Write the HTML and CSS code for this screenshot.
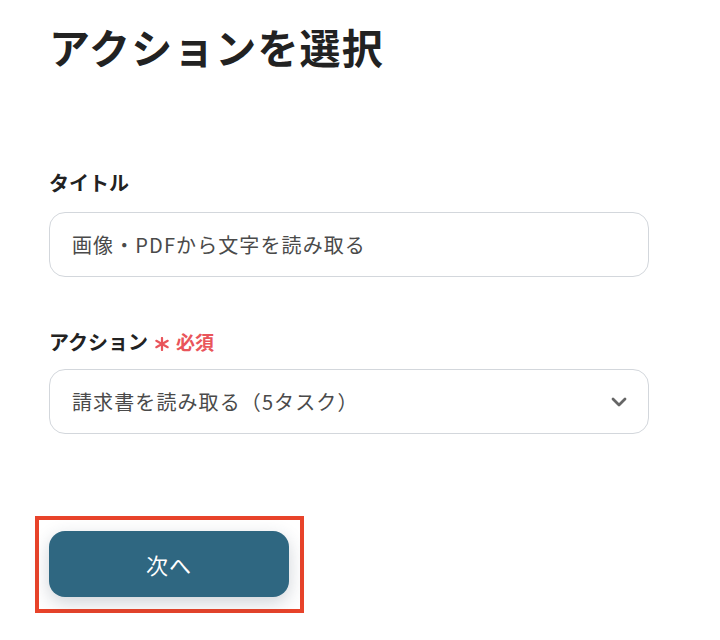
FILE: index.html
```html
<!DOCTYPE html>
<html lang="ja">
<head>
<meta charset="utf-8">
<title>アクションを選択</title>
<link rel="stylesheet" href="styles.css">
</head>
<body>
<main class="page">
  <h1 class="title">アクションを選択</h1>

  <div class="field field-title">
    <label class="label">タイトル</label>
    <div class="box">画像・PDFから文字を読み取る</div>
  </div>

  <div class="field field-action">
    <label class="label">アクション<span class="req"><svg class="star" width="16" height="14" viewBox="0 0 16 14" aria-hidden="true"><g stroke="#e9555b" stroke-width="2.2" stroke-linecap="round"><path d="M8 1 L8 13"/><path d="M2.3 3.8 L13.7 10.2"/><path d="M2.3 10.2 L13.7 3.8"/></g></svg>必須</span></label>
    <div class="box select">
      <span>請求書を読み取る（5タスク）</span>
      <svg class="chev" width="16" height="10" viewBox="0 0 16 10" aria-hidden="true">
        <path d="M2 2 L8 8 L14 2" fill="none" stroke="#666" stroke-width="2.8" stroke-linecap="round" stroke-linejoin="round"/>
      </svg>
    </div>
  </div>

  <div class="highlight">
    <button class="next" type="button">次へ</button>
  </div>
</main>
</body>
</html>
```

FILE: styles.css
```css
html, body {
  margin: 0;
  padding: 0;
  background: #ffffff;
}

body {
  font-family: "Noto Sans CJK JP", "Noto Sans", sans-serif;
  color: #222222;
}

.page {
  padding: 22px 0 0 49px;
  width: 600px;
}

.title {
  margin: 0;
  font-size: 41px;
  line-height: 48px;
  font-weight: 700;
  letter-spacing: 1.1px;
  color: #222222;
}

.field {
  display: flex;
  flex-direction: column;
}

.field-title {
  margin-top: 99px;
}

.field-action {
  margin-top: 51px;
}

.label {
  display: flex;
  align-items: center;
  font-size: 20px;
  line-height: 28px;
  font-weight: 700;
  color: #222222;
}

.req {
  display: inline-flex;
  align-items: center;
  margin-left: 6px;
  color: #e9555b;
  font-size: 19px;
  font-weight: 700;
}

.star {
  display: block;
  margin-right: 6px;
  position: relative;
  top: 2px;
}

.box {
  box-sizing: border-box;
  height: 65px;
  border: 1px solid #d3d7dc;
  border-radius: 16px;
  padding: 0 22px;
  display: flex;
  align-items: center;
  font-size: 20px;
  letter-spacing: 1.1px;
  color: #4a4a4a;
}

.field-title .box {
  margin-top: 15px;
}

.field-action .box {
  margin-top: 13px;
}

.select {
  justify-content: space-between;
  padding-right: 21px;
}

.chev {
  display: block;
}

.highlight {
  display: inline-block;
  margin-top: 82px;
  margin-left: -14px;
  border: 4px solid #e8432a;
  padding: 11px 11px 12px 10px;
}

.next {
  display: block;
  width: 240px;
  height: 66px;
  border: none;
  border-radius: 16px;
  background: #2f6781;
  color: #ffffff;
  font-family: "Noto Sans CJK JP", "Noto Sans", sans-serif;
  font-size: 22px;
  font-weight: 400;
  letter-spacing: 1px;
  box-shadow: 0 6px 18px rgba(40, 60, 80, 0.22);
  cursor: pointer;
}
```
